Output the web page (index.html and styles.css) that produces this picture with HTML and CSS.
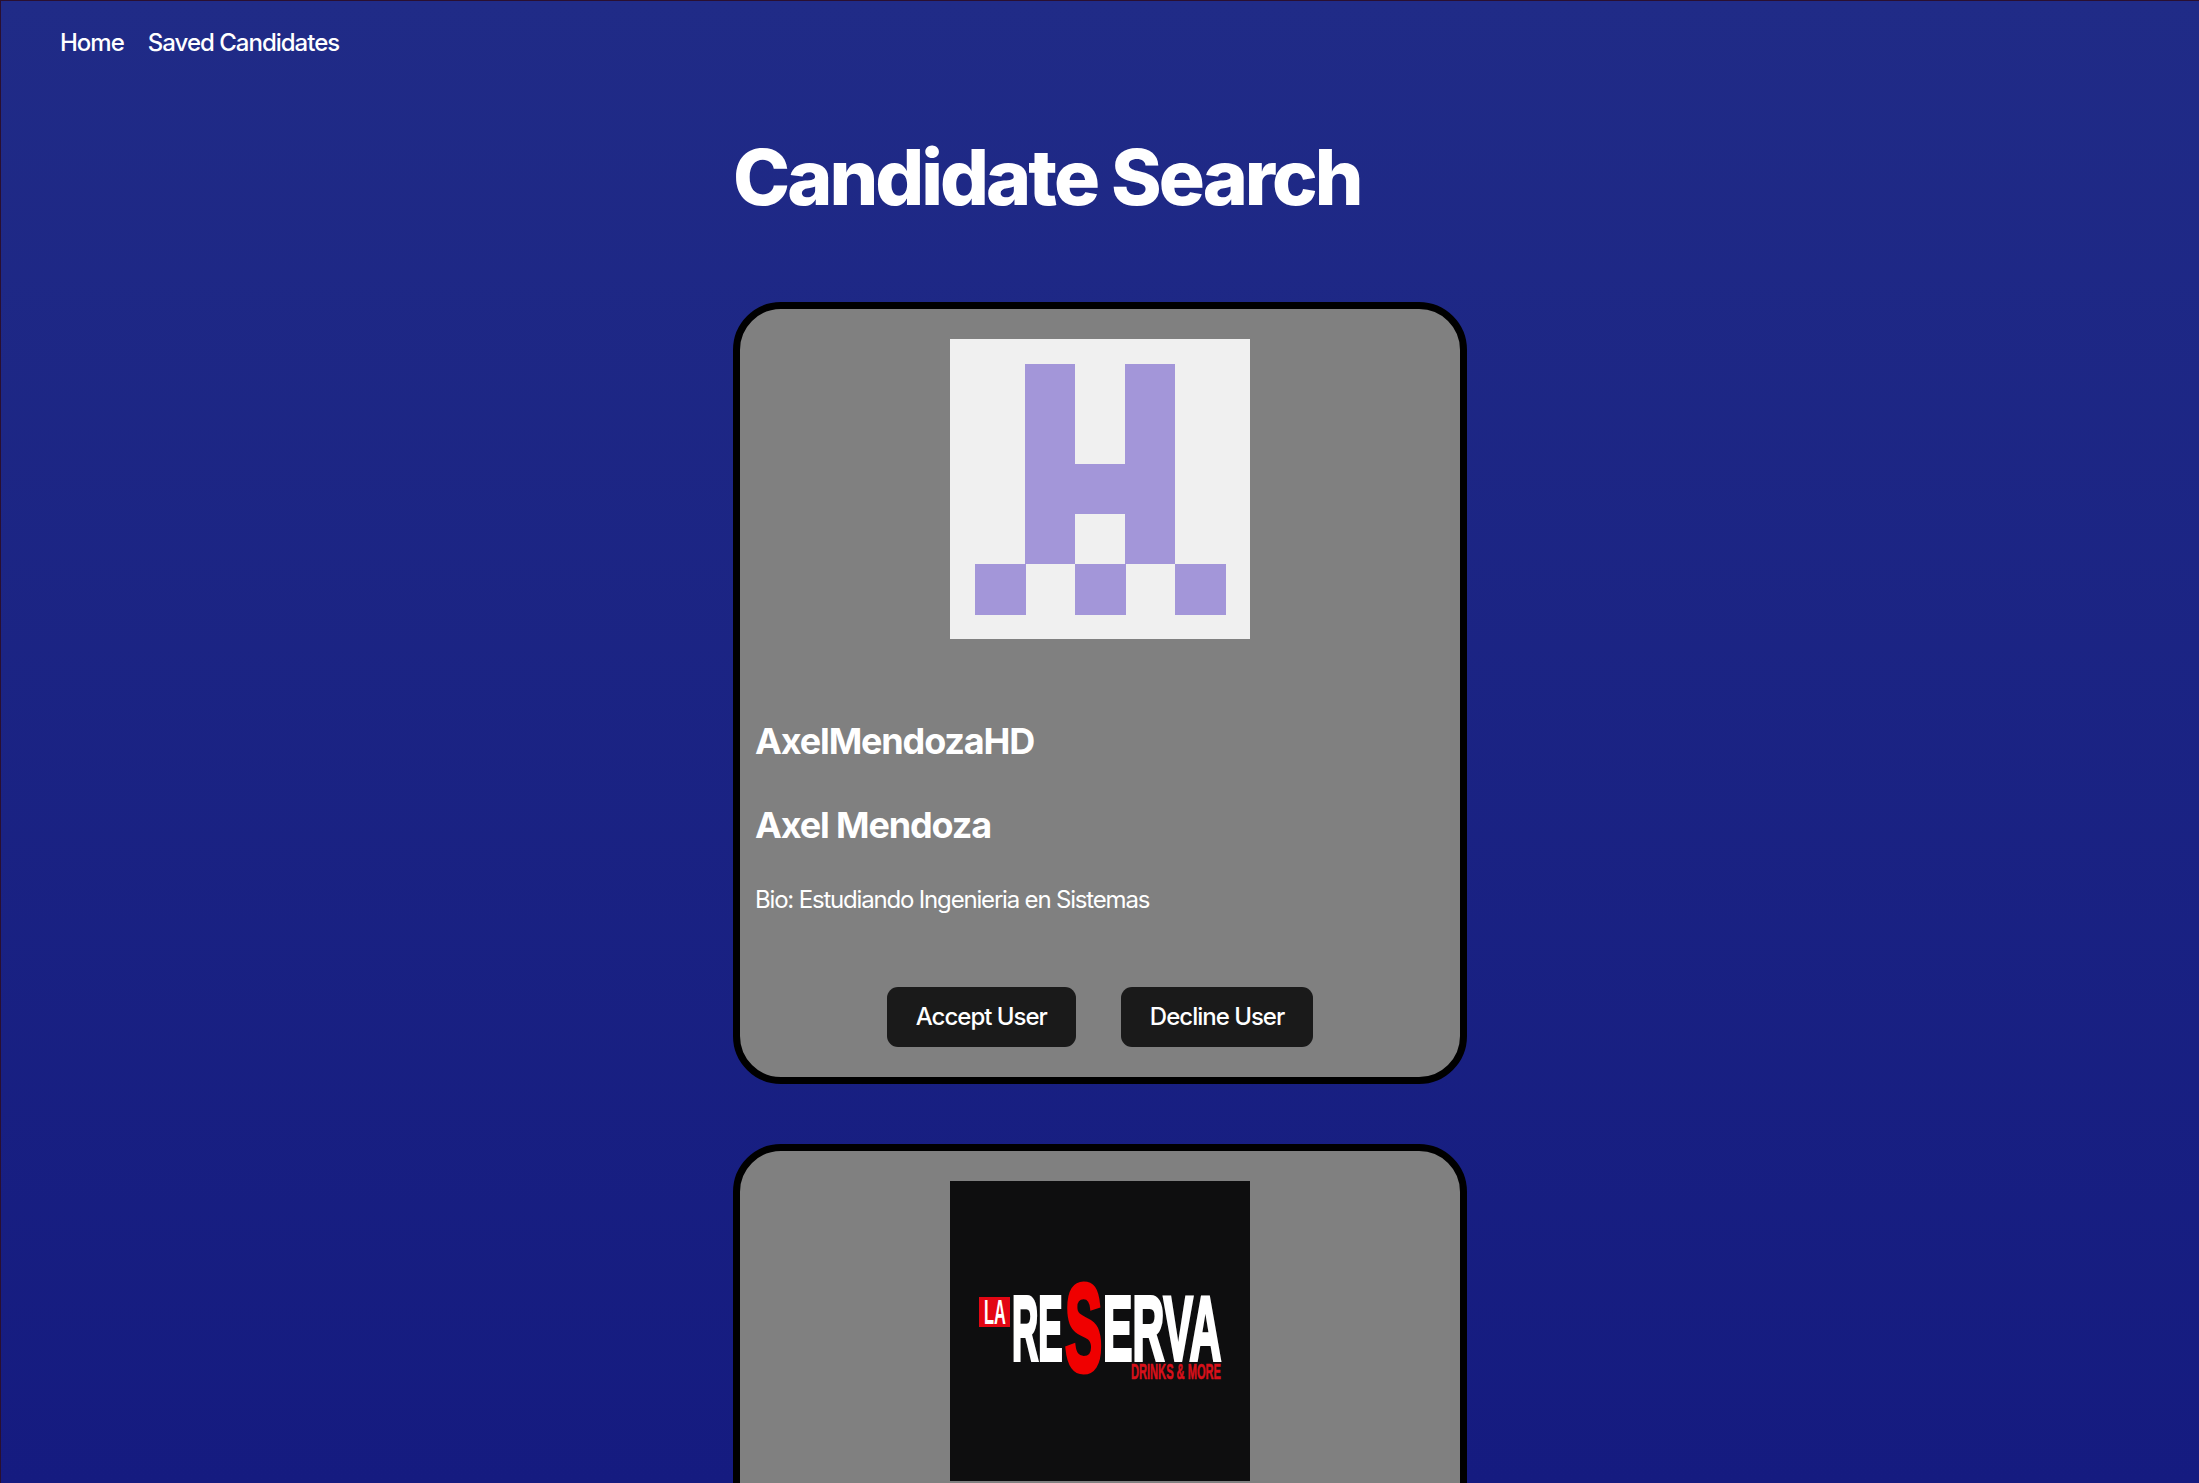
FILE: index.html
```html
<!DOCTYPE html>
<html lang="en">
<head>
    <meta charset="UTF-8">
    <title>Candidate Search</title>
    <link rel="stylesheet" href="styles.css">
</head>
<body>
<nav class="nav">
    <a href="#">Home</a>
    <a href="#">Saved Candidates</a>
</nav>
<main class="main">
    <h1 class="title">Candidate Search</h1>
    <section class="card">
        <svg class="avatar" viewBox="0 0 300 300">
            <rect width="300" height="300" fill="#f0f0f0"/>
            <g fill="#a396d9">
                <rect x="75" y="25" width="50" height="200"/>
                <rect x="175" y="25" width="50" height="200"/>
                <rect x="125" y="125" width="50" height="50"/>
                <rect x="25" y="225" width="51" height="51"/>
                <rect x="125" y="225" width="51" height="51"/>
                <rect x="225" y="225" width="51" height="51"/>
            </g>
        </svg>
        <h2 class="name">AxelMendozaHD</h2>
        <h2 class="name">Axel Mendoza</h2>
        <p class="bio">Bio: Estudiando Ingenieria en Sistemas</p>
        <div class="actions">
            <button class="btn">Accept User</button>
            <button class="btn">Decline User</button>
        </div>
    </section>
    <section class="card">
        <svg class="avatar" viewBox="0 0 300 300">
            <rect width="300" height="300" fill="#0e0e0f"/>
            <rect x="29" y="116" width="31" height="30" fill="#e30613"/>
            <g class="logo-text">
                <text class="logo-la" transform="translate(34 143) scale(.47 1)">LA</text>
                <text class="logo-main" transform="translate(62 179) scale(.405 1)">RE</text>
                <text class="logo-main" transform="translate(153 179) scale(.49 1)">ERVA</text>
                <text class="logo-s" transform="translate(115 190) scale(.45 1)">S</text>
                <text class="logo-sub" transform="translate(181 198) scale(.505 1)">DRINKS &amp; MORE</text>
            </g>
        </svg>
    </section>
</main>
</body>
</html>
```
FILE: styles.css
```css
*{margin:0;padding:0;box-sizing:border-box;}
html{height:100%;}
body{
    height:1483px;
    overflow:hidden;
    border-top:1px solid #2a0f30;
    border-left:1px solid #2a0f30;
    background:linear-gradient(#202b87,#151b80);
    font-family:Inter,"Liberation Sans",sans-serif;
    color:#fff;
    letter-spacing:-1px;
}
.nav{
    display:flex;
    gap:24px;
    padding:28px 59px 0;
    font-size:24px;
    line-height:28px;
}
.nav a{color:#fff;text-decoration:none;font-weight:500;}
.main{
    width:734px;
    margin:0 auto;
}
.title{
    margin-top:75px;
    margin-bottom:78px;
    font-size:76.8px;
    line-height:92px;
    font-weight:800;
    letter-spacing:-2.95px;
    white-space:nowrap;
}
.card{
    display:flex;
    flex-direction:column;
    height:782px;
    margin-bottom:60px;
    padding:30px 15px 0;
    background:#808080;
    border:7px solid #000;
    border-radius:48px;
}
.avatar{
    display:block;
    flex:none;
    width:300px;
    height:300px;
    margin:0 auto;
}
.name{
    font-size:36px;
    line-height:42px;
    font-weight:700;
    letter-spacing:-1.15px;
    margin-top:81px;
}
.name + .name{margin-top:42px;}
.bio{
    margin-top:40px;
    font-size:24px;
    line-height:28px;
    letter-spacing:-1.18px;
}
.actions{
    display:flex;
    justify-content:center;
    gap:45px;
    margin-top:73px;
}
.btn{
    height:60px;
    padding:0 29px 2px;
    border:none;
    border-radius:11px;
    background:#1a1a1a;
    color:#fff;
    font-family:inherit;
    font-size:24px;
    font-weight:500;
    letter-spacing:-1px;
}
.logo-text text{
    font-family:"Liberation Sans",sans-serif;
    font-weight:700;
    letter-spacing:0;
    vector-effect:non-scaling-stroke;
}
.logo-la{font-size:35px;fill:#fff;}
.logo-main{font-size:90px;fill:#fff;stroke:#fff;stroke-width:3px;}
.logo-s{font-size:124px;fill:#f00000;stroke:#f00000;stroke-width:4px;}
.logo-sub{font-size:22px;fill:#d8101a;stroke:#d8101a;stroke-width:.5px;}
```
